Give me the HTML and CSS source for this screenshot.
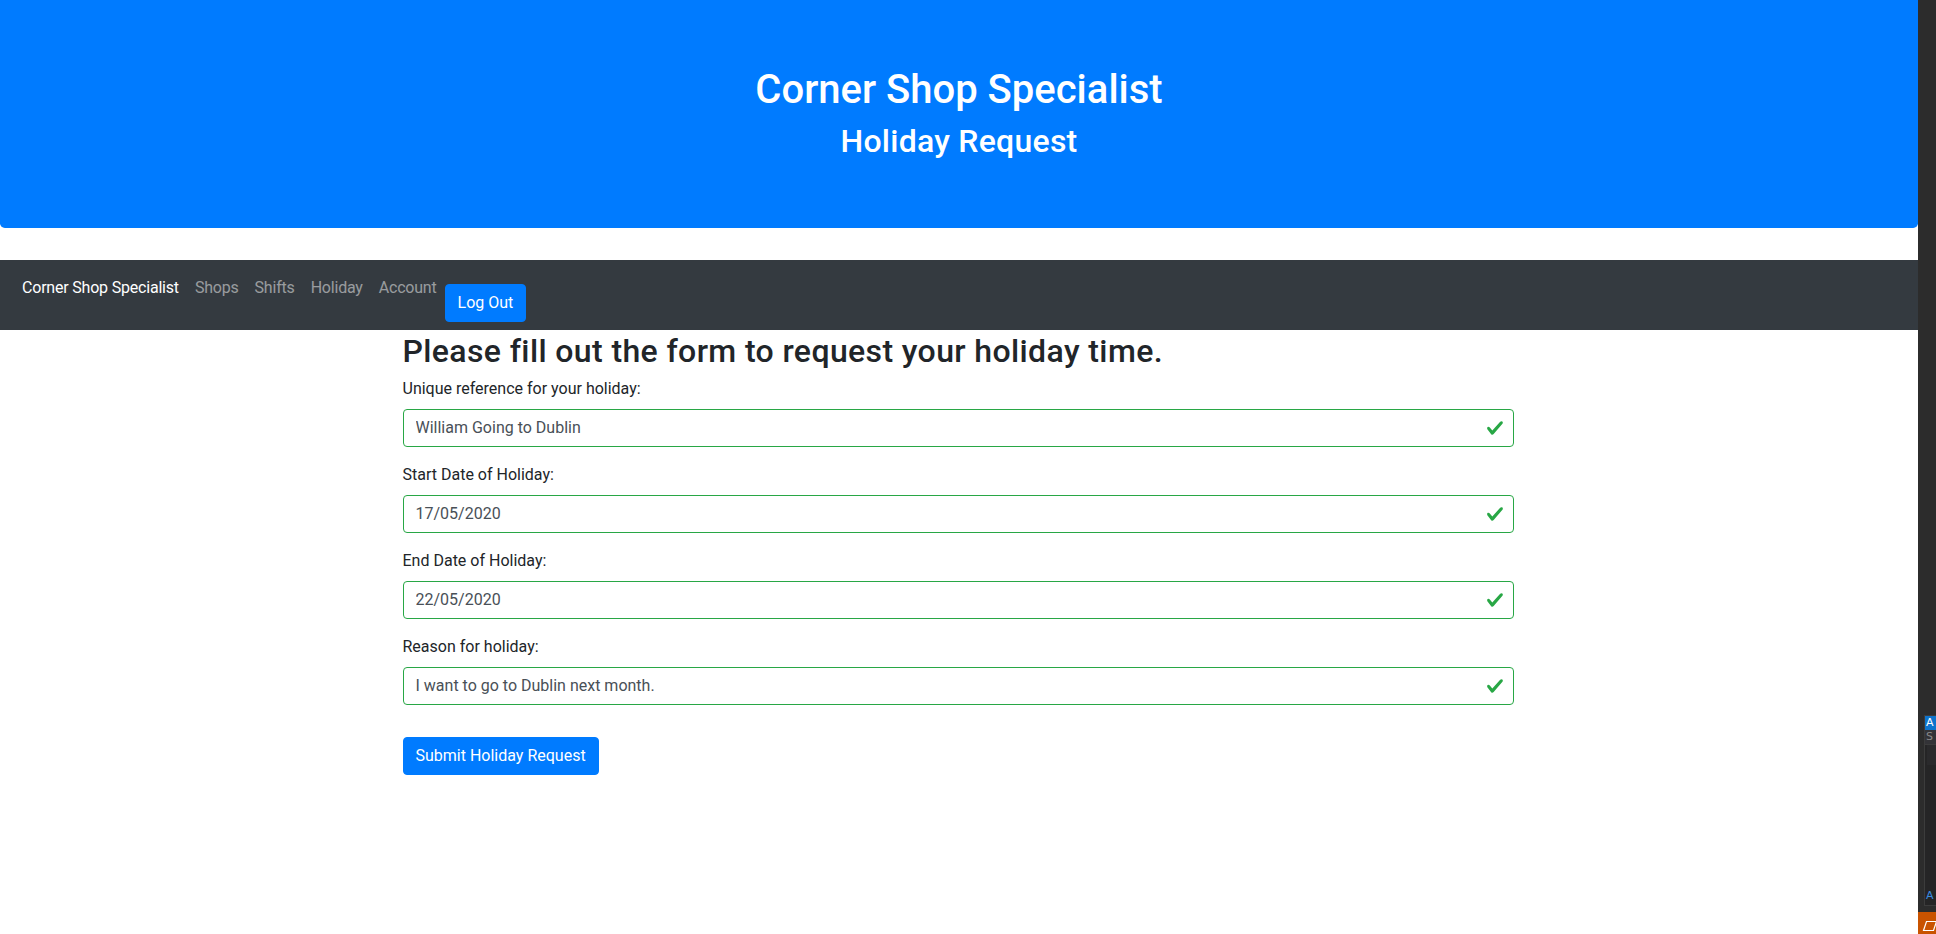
FILE: index.html
```html
<!DOCTYPE html>
<html lang="en">
<head>
<meta charset="utf-8">
<title>Holiday Request</title>
<link rel="stylesheet" href="styles.css">
</head>
<body>
<div class="page">
  <header class="jumbotron">
    <h1 class="jt-title">Corner Shop Specialist</h1>
    <h2 class="jt-sub">Holiday Request</h2>
  </header>
  <nav class="navbar">
    <a class="brand" href="#">Corner Shop Specialist</a>
    <a class="nav-link" href="#">Shops</a>
    <a class="nav-link" href="#">Shifts</a>
    <a class="nav-link" href="#">Holiday</a>
    <a class="nav-link" href="#">Account</a>
    <button class="btn btn-nav" type="button">Log Out</button>
  </nav>
  <main class="container">
    <h2 class="form-title">Please fill out the form to request your holiday time.</h2>
    <form class="form">
      <div class="form-group">
        <label class="label" for="ref">Unique reference for your holiday:</label>
        <div class="field">
          <input class="input" id="ref" type="text" value="William Going to Dublin">
          <svg class="check" viewBox="0 0 8 8" width="18" height="18"><path fill="#28a745" d="M2.3 6.73L.6 4.53c-.4-1.04.46-1.4 1.1-.8l1.1 1.4 3.4-3.8c.6-.63 1.6-.27 1.2.7l-4 4.6c-.43.5-.8.4-1.1.1z"/></svg>
        </div>
      </div>
      <div class="form-group">
        <label class="label" for="start">Start Date of Holiday:</label>
        <div class="field">
          <input class="input" id="start" type="text" value="17/05/2020">
          <svg class="check" viewBox="0 0 8 8" width="18" height="18"><path fill="#28a745" d="M2.3 6.73L.6 4.53c-.4-1.04.46-1.4 1.1-.8l1.1 1.4 3.4-3.8c.6-.63 1.6-.27 1.2.7l-4 4.6c-.43.5-.8.4-1.1.1z"/></svg>
        </div>
      </div>
      <div class="form-group">
        <label class="label" for="end">End Date of Holiday:</label>
        <div class="field">
          <input class="input" id="end" type="text" value="22/05/2020">
          <svg class="check" viewBox="0 0 8 8" width="18" height="18"><path fill="#28a745" d="M2.3 6.73L.6 4.53c-.4-1.04.46-1.4 1.1-.8l1.1 1.4 3.4-3.8c.6-.63 1.6-.27 1.2.7l-4 4.6c-.43.5-.8.4-1.1.1z"/></svg>
        </div>
      </div>
      <div class="form-group">
        <label class="label" for="reason">Reason for holiday:</label>
        <div class="field">
          <input class="input" id="reason" type="text" value="I want to go to Dublin next month.">
          <svg class="check" viewBox="0 0 8 8" width="18" height="18"><path fill="#28a745" d="M2.3 6.73L.6 4.53c-.4-1.04.46-1.4 1.1-.8l1.1 1.4 3.4-3.8c.6-.63 1.6-.27 1.2.7l-4 4.6c-.43.5-.8.4-1.1.1z"/></svg>
        </div>
      </div>
      <button class="btn btn-submit" type="button">Submit Holiday Request</button>
    </form>
  </main>
</div>
<aside class="strip">
  <div class="strip-space"></div>
  <div class="panel">
    <div class="panel-head">A</div>
    <div class="panel-row">S</div>
    <div class="panel-row2"></div>
    <div class="panel-fill"></div>
    <div class="panel-foot">A</div>
  </div>
  <div class="strip-gap"></div>
  <div class="status">
    <svg class="status-icon" viewBox="0 0 16 12" width="16" height="12"><path d="M4.5 1.5H14.5L11.5 10.5H1.5Z" fill="none" stroke="#fff" stroke-width="1.2"/></svg>
  </div>
</aside>
</body>
</html>
```
FILE: styles.css
```css
* { box-sizing: border-box; }
html, body { margin: 0; padding: 0; }
body {
  display: flex;
  width: 1936px;
  height: 934px;
  overflow: hidden;
  font-family: Roboto, "Liberation Sans", sans-serif;
  font-size: 16px;
  line-height: 1.5;
  color: #212529;
  background: #fff;
}
.page {
  width: 1918px;
  flex: none;
  height: 934px;
  background: #fff;
}
/* Jumbotron */
.jumbotron {
  background: #007bff;
  color: #fff;
  text-align: center;
  padding: 66px 32px 60px;
  margin-bottom: 32px;
  border-radius: 0 0 4.8px 4.8px;
}
.jt-title {
  margin: 0 0 8px;
  font-size: 40px;
  font-weight: 500;
  line-height: 48px;
}
.jt-sub {
  margin: 0 0 8px;
  font-size: 32px;
  font-weight: 500;
  line-height: 38.4px;
  letter-spacing: 0.25px;
}
/* Navbar */
.navbar {
  display: flex;
  align-items: flex-start;
  background: #343a40;
  padding: 8px 22px;
  letter-spacing: -0.2px;
}
.brand {
  color: #fff;
  text-decoration: none;
  padding: 8px 0;
  margin-right: 8px;
  line-height: 24px;
}
.nav-link {
  color: rgba(255, 255, 255, 0.5);
  text-decoration: none;
  padding: 8px 8px;
  line-height: 24px;
}
.btn {
  font-family: inherit;
  font-size: 16px;
  line-height: 24px;
  padding: 6px 12px;
  border: 1px solid #007bff;
  background: #007bff;
  color: #fff;
  border-radius: 4px;
  cursor: pointer;
}
.btn-nav {
  margin-top: 16px;
  letter-spacing: 0;
}
/* Main form */
.container {
  width: 1140px;
  margin: 0 auto;
  padding: 0 15px 0 13.5px;
}
.form-title {
  margin: 2px 0 6px;
  font-size: 32px;
  font-weight: 500;
  line-height: 38.4px;
  letter-spacing: 0.38px;
}
.form { margin: 0; }
.form-group { margin-bottom: 16px; }
.label {
  display: inline-block;
  margin-bottom: 8px;
  line-height: 24px;
}
.field { position: relative; }
.input {
  display: block;
  width: 100%;
  height: 38px;
  padding: 6px 36px 6px 12px;
  font-family: inherit;
  font-size: 16px;
  line-height: 24px;
  color: #495057;
  background: #fff;
  border: 1px solid #28a745;
  border-radius: 4px;
  outline: none;
}
.check {
  position: absolute;
  right: 10px;
  top: 10px;
}
.btn-submit {
  display: inline-block;
  margin-top: 16px;
}
/* Right side strip (another window) */
.strip {
  width: 18px;
  flex: none;
  height: 934px;
  background: #2c2c2c;
  display: flex;
  flex-direction: column;
  overflow: hidden;
}
.strip-space { height: 715px; flex: none; }
.panel {
  margin-left: 6px;
  height: 191px;
  flex: none;
  display: flex;
  flex-direction: column;
  background: #252526;
  border-left: 1px solid #3c3c3c;
  border-top: 1px solid #3c3c3c;
  border-bottom: 1px solid #3c3c3c;
  font-family: "DejaVu Sans", sans-serif;
  font-size: 11px;
  line-height: 14px;
}
.panel-head {
  height: 14px;
  background: #0e74cc;
  color: #fff;
  padding-left: 1px;
}
.panel-row {
  height: 15px;
  background: #333337;
  color: #8a8a8a;
  padding-left: 1px;
  border-bottom: 1px solid #3c3c3c;
}
.panel-row2 {
  height: 20px;
  margin-left: 2px;
  background: #2a2a2c;
}
.panel-fill { flex: 1; }
.panel-foot {
  height: 16px;
  color: #3a8de0;
  padding-left: 1px;
}
.strip-gap { height: 6px; flex: none; }
.status {
  flex: 1;
  background: #c95300;
  padding: 8px 0 0 4px;
}
.status-icon { display: block; }
```
